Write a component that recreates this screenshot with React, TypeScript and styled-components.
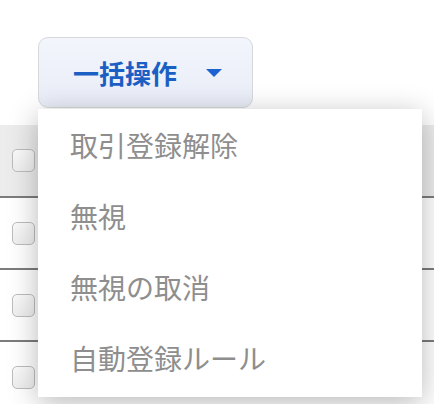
import * as React from 'react';
import styled, { createGlobalStyle } from 'styled-components';

const GlobalStyle = createGlobalStyle`
    * {
        box-sizing: border-box;
    }

    body {
        margin: 0;
        background: #ffffff;
        font-family: 'Noto Sans CJK JP', 'Noto Sans', sans-serif;
    }
`;

const Page = styled.div`
    position: relative;
    width: 434px;
    height: 404px;
    overflow: hidden;
`;

const Toolbar = styled.div`
    display: flex;
    height: 125px;
    padding: 37px 0 0 38px;
`;

const BulkButton = styled.button`
    display: flex;
    align-items: center;
    width: 215px;
    height: 71px;
    padding: 0 0 0 34px;
    border: 1.5px solid #d6d8dc;
    border-radius: 10px;
    background: linear-gradient(#f2f5fc, #e9edf7);
    font-family: inherit;
    font-size: 26px;
    font-weight: 700;
    color: #1c5fc4;
    cursor: pointer;
`;

const Caret = styled.span`
    margin-left: 29px;
    width: 0;
    height: 0;
    border-left: 8.5px solid transparent;
    border-right: 8.5px solid transparent;
    border-top: 8px solid #1a63d0;
`;

const Table = styled.div`
    display: flex;
    flex-direction: column;
`;

const Row = styled.div<{ $header?: boolean }>`
    display: flex;
    align-items: center;
    height: ${p => (p.$header ? '73px' : '72px')};
    padding-left: 12px;
    background: ${p => (p.$header ? '#ececec' : '#ffffff')};
    border-bottom: 2px solid #7c7c7c;
`;

const CheckBox = styled.span`
    width: 23px;
    height: 23px;
    border: 1px solid #bdbdbd;
    border-radius: 5px;
    background: linear-gradient(#fafafa, #eeeeee);
`;

const Menu = styled.ul`
    position: absolute;
    top: 109px;
    left: 38px;
    width: 384px;
    margin: 0;
    padding: 0 0 4px;
    list-style: none;
    background: #ffffff;
    box-shadow: 0 6px 28px rgba(0, 0, 0, 0.28);
`;

const MenuItem = styled.li`
    display: flex;
    align-items: center;
    height: 71px;
    padding-left: 32px;
    font-size: 28px;
    color: #8e8e8e;
`;

const menuItems = ['取引登録解除', '無視', '無視の取消', '自動登録ルール'];

export default function App() {
    return <Page>
        <GlobalStyle />
        <Toolbar>
            <BulkButton>
                一括操作
                <Caret />
            </BulkButton>
        </Toolbar>
        <Table>
            <Row $header><CheckBox /></Row>
            <Row><CheckBox /></Row>
            <Row><CheckBox /></Row>
            <Row><CheckBox /></Row>
        </Table>
        <Menu>
            {menuItems.map(item => <MenuItem key={item}>{item}</MenuItem>)}
        </Menu>
    </Page>;
}
